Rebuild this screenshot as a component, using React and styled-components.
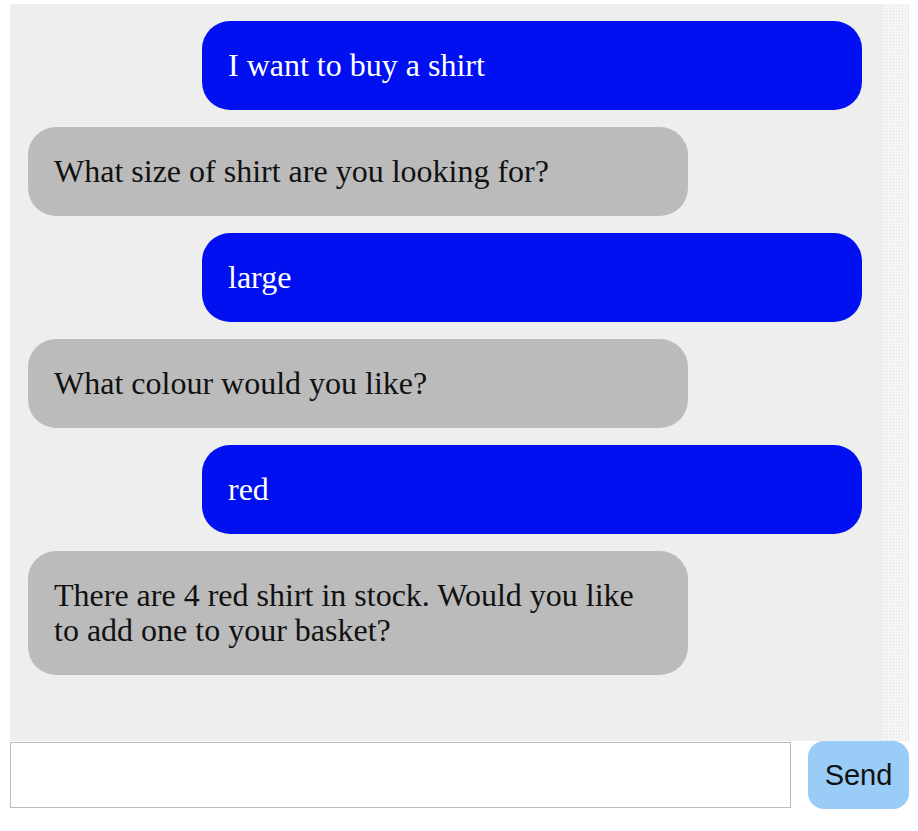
import React, { useState } from 'react';
import styled, { createGlobalStyle } from 'styled-components';

const GlobalStyle = createGlobalStyle`
  html, body {
    margin: 0;
    padding: 0;
    background: #fff;
  }
`;

const messages = [
  { from: 'user', text: 'I want to buy a shirt' },
  { from: 'bot', text: 'What size of shirt are you looking for?' },
  { from: 'user', text: 'large' },
  { from: 'bot', text: 'What colour would you like?' },
  { from: 'user', text: 'red' },
  { from: 'bot', text: 'There are 4 red shirt in stock. Would you like to add one to your basket?' },
];

const App = () => {
  const [value, setValue] = useState('');

  return (
    <>
      <GlobalStyle />
      <Page>
        <ChatWindow>
          <MessageList>
            {messages.map((m, i) => (
              <Bubble key={i} mine={m.from === 'user'}>
                {m.text}
              </Bubble>
            ))}
          </MessageList>
          <ScrollTrack />
        </ChatWindow>
        <Composer onSubmit={(e) => e.preventDefault()}>
          <TextInput value={value} onChange={(e) => setValue(e.target.value)} />
          <SendButton type="submit">Send</SendButton>
        </Composer>
      </Page>
    </>
  );
};

export default App;

// Styled components
const Page = styled.div`
  width: 899px;
  padding: 4px 0 0 10px;
`;

const ChatWindow = styled.div`
  display: flex;
  height: 737px;
`;

const MessageList = styled.div`
  flex: 1;
  display: flex;
  flex-direction: column;
  gap: 17px;
  padding: 17px 21px 0 18px;
  background-color: #eeeeee;
`;

const ScrollTrack = styled.div`
  width: 25px;
  background-color: #f6f6f6;
  background-image: radial-gradient(#dcdcdc 0.7px, transparent 0.8px);
  background-size: 3px 3px;
  border-right: 1px solid #e6e6e6;
`;

const Bubble = styled.div`
  box-sizing: border-box;
  width: 660px;
  align-self: ${(p) => (p.mine ? 'flex-end' : 'flex-start')};
  padding: 27px 30px 27px 26px;
  border-radius: 28px;
  background-color: ${(p) => (p.mine ? '#0010f0' : '#bbbbbb')};
  color: ${(p) => (p.mine ? '#ffffff' : '#111111')};
  font-family: "Liberation Serif", "Times New Roman", serif;
  font-size: 32px;
  line-height: 35px;
`;

const Composer = styled.form`
  display: flex;
  align-items: flex-start;
  margin: 0;
`;

const TextInput = styled.input`
  box-sizing: border-box;
  width: 781px;
  height: 66px;
  margin-top: 1px;
  padding: 0 10px;
  border: 1px solid #bbbbbb;
  background: #fff;
  font-family: "Liberation Sans", Arial, sans-serif;
  font-size: 28px;
  outline: none;
`;

const SendButton = styled.button`
  box-sizing: border-box;
  width: 101px;
  height: 68px;
  margin-left: 17px;
  border: none;
  border-radius: 16px;
  background-color: #99ccf6;
  color: #111;
  font-family: "Liberation Sans", Arial, sans-serif;
  font-size: 29px;
  padding: 0;
  cursor: pointer;
`;
